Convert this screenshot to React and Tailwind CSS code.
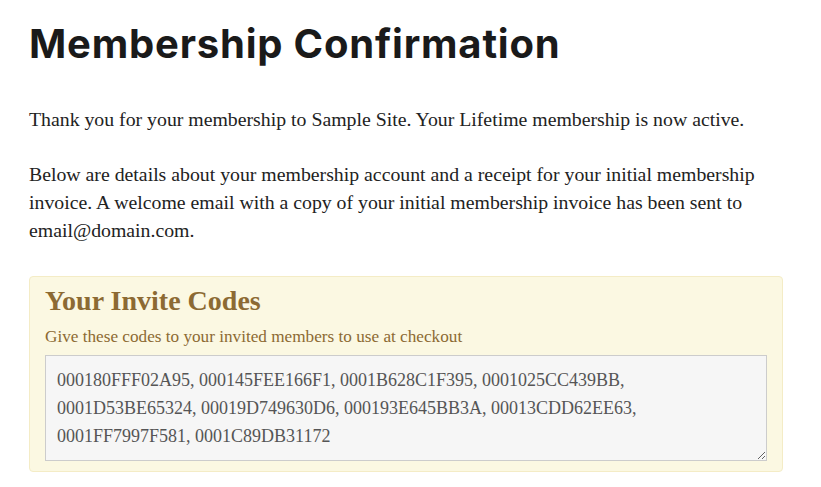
export default function App() {
	const codes =
		"000180FFF02A95, 000145FEE166F1, 0001B628C1F395, 0001025CC439BB, 0001D53BE65324, 00019D749630D6, 000193E645BB3A, 00013CDD62EE63, 0001FF7997F581, 0001C89DB31172";

	return (
		<div className="bg-white min-h-screen pl-[29px] pt-[18px]">
			<div className="w-[754px]">
				{/* Page title */}
				<h1 className="font-['Inter',sans-serif] font-bold text-[40px] leading-[52px] text-[#1a1a1a] tracking-[0.8px]">
					Membership Confirmation
				</h1>

				<div className="font-['Liberation_Serif',serif] text-[19.8px] leading-[28px] text-[#222]">
					<p className="mt-[35px]">
						Thank you for your membership to Sample Site. Your Lifetime membership is now active.
					</p>
					<p className="mt-[27px]">
						Below are details about your membership account and a receipt for your initial membership
						invoice. A welcome email with a copy of your initial membership invoice has been sent to
						email@domain.com.
					</p>
				</div>

				{/* Invite codes box */}
				<div className="mt-[32px] bg-[#fbf8e2] border border-[#f4ecc6] rounded-[4px] px-[15px] pt-[9px] pb-[10px]">
					<h3 className="font-['Liberation_Serif',serif] font-bold text-[28px] leading-[30px] text-[#8c6a33]">
						Your Invite Codes
					</h3>
					<p className="mt-[10px] font-['Liberation_Serif',serif] text-[17.2px] leading-[22px] text-[#8c6a33]">
						Give these codes to your invited members to use at checkout
					</p>
					<textarea
						readOnly
						value={codes}
						className="mt-[7px] block w-full h-[106px] bg-[#f6f6f6] border border-[#cccccc] px-[11px] pt-[10px] pb-[6px] font-['Liberation_Serif',serif] text-[18px] leading-[28px] text-[#555] resize-y outline-none"
					/>
				</div>
			</div>
		</div>
	);
}
